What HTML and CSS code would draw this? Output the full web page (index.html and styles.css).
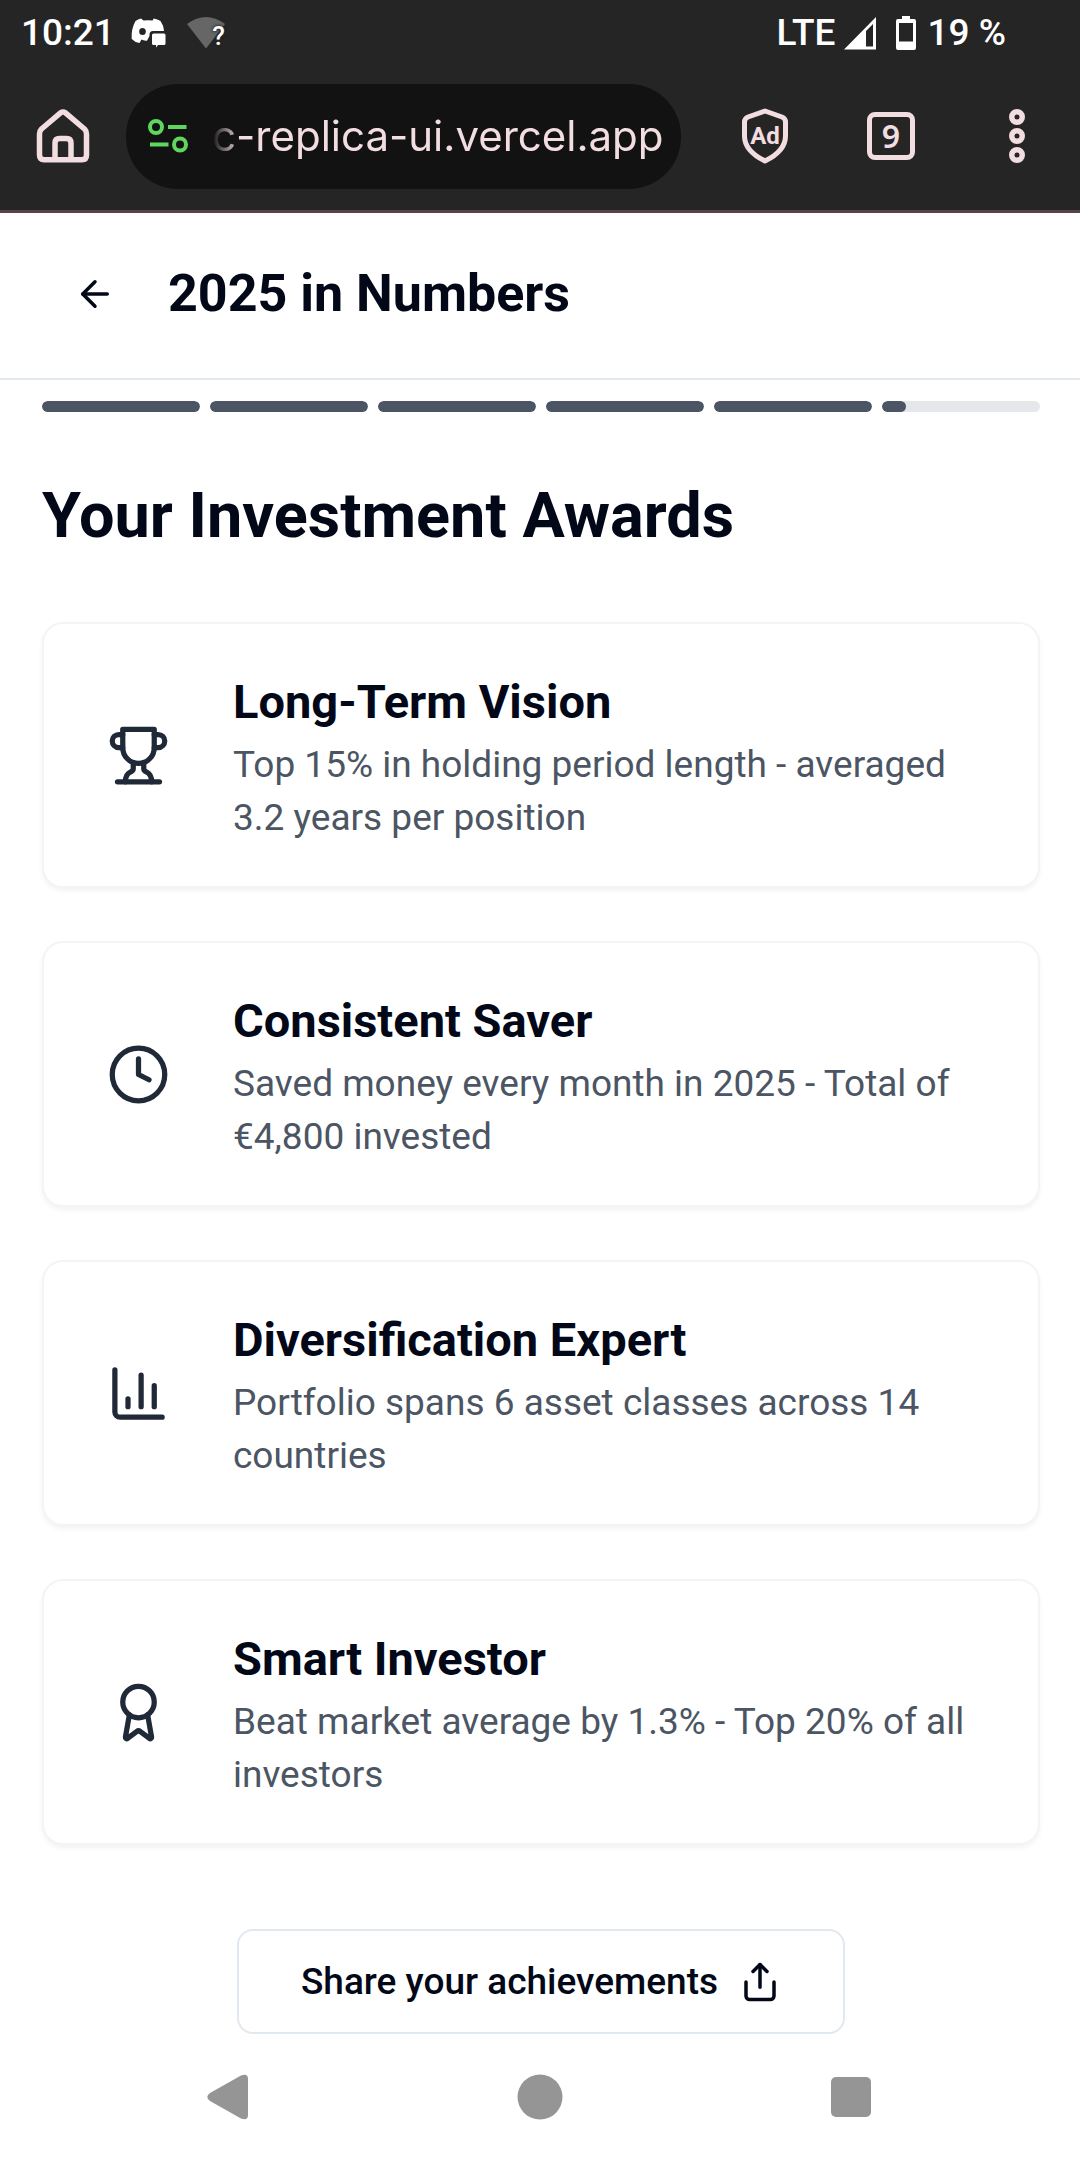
FILE: index.html
```html
<!DOCTYPE html>
<html lang="en">
<head>
<meta charset="utf-8">
<meta name="viewport" content="width=device-width, initial-scale=1">
<title>2025 in Numbers</title>
<link rel="stylesheet" href="styles.css">
</head>
<body>
<div class="screen">
  <div class="chrome">
    <div class="status">
      <div class="status-group">
        <span class="clock">10:21</span>
        <svg class="status-discord" width="36" height="32" viewBox="0 0 36 32" fill="#fff" aria-hidden="true">
          <path d="M10 1.500Q7 2 4.500 4Q0 12 .7 22Q4 25.500 8.500 26L10.500 22.500Q14 24 16 23.800L18.500 19V17.500Q18.500 14 22 14H33Q32.500 8 29.500 4Q26.500 2 22.800 1.500L21.500 3.500Q17 2.800 12.500 3.500Z"/>
          <ellipse cx="11.500" cy="14.500" rx="3.300" ry="3.600" fill="#252525"/>
          <path d="M22.500 16.500H33Q34.500 16.500 34.500 18V26.500Q34.500 28 33 28H27L25 30.500V28H22.500Q21 28 21 26.500V18Q21 16.500 22.500 16.500Z"/>
        </svg>
        <span class="wifi">
          <svg width="38" height="32" viewBox="0 0 38 32" aria-hidden="true"><path d="M0 7Q19 -7 38 7L19 31.500Z" fill="#666"/></svg>
          <span class="wifi-mark">?</span>
        </span>
      </div>
      <div class="status-group">
        <span class="lte">LTE</span>
        <svg class="signal" width="32" height="34" viewBox="0 0 32 34" aria-hidden="true"><path fill="#fff" fill-rule="evenodd" d="M0 33.500L32 1V33.500ZM22 15V30.500H29V8Z"/></svg>
        <svg class="battery" width="20" height="34" viewBox="0 0 20 34" aria-hidden="true"><path fill="#fff" fill-rule="evenodd" d="M6 0H14V3H18Q20 3 20 5V32Q20 34 18 34H2Q0 34 0 32V5Q0 3 2 3H6ZM3 7V25.500H17V7Z"/></svg>
        <span class="percent">19 %</span>
      </div>
    </div>
    <div class="toolbar">
      <button class="tool" type="button" aria-label="Home">
        <svg width="54" height="54" viewBox="0 0 54 54" fill="none" stroke="#f2dde1" stroke-width="5.500" stroke-linejoin="round" aria-hidden="true"><path d="M24.500 3.800Q27 2.200 29.500 3.800L48.500 20Q50.500 22 50.500 25V46Q50.500 50.800 46 50.800H8Q3.500 50.800 3.500 46V25Q3.500 22 5.500 20Z"/><path d="M19 50V34Q19 29.500 23.500 29.500H30.500Q35 29.500 35 34V50"/></svg>
      </button>
      <div class="address">
        <svg width="40" height="34" viewBox="0 0 40 34" fill="none" stroke="#5fd75f" stroke-width="4" aria-hidden="true"><circle cx="8" cy="8" r="6"/><circle cx="32" cy="25.500" r="6"/><path d="M20 8H38.500M2 25.500H20.500"/></svg>
        <input class="url" type="text" value="c-replica-ui.vercel.app" aria-label="Address">
      </div>
      <button class="tool" type="button" aria-label="Ad blocker">
        <svg width="48" height="56" viewBox="0 0 48 56" fill="none" stroke="#f2dde1" stroke-width="5" stroke-linejoin="round" aria-hidden="true"><path d="M24 3L41 9Q44.500 10.500 44.500 14V28Q44.500 43 24 53Q3.500 43 3.500 28V14Q3.500 10.500 7 9Z"/></svg>
        <span class="ad">Ad</span>
      </button>
      <button class="tool" type="button" aria-label="9 open tabs">
        <span class="tabs">9</span>
      </button>
      <button class="tool" type="button" aria-label="Menu">
        <svg width="16" height="54" viewBox="0 0 16 54" fill="none" stroke="#f2dde1" stroke-width="5.500" aria-hidden="true"><circle cx="8" cy="8" r="5.250"/><circle cx="8" cy="27" r="5.250"/><circle cx="8" cy="46" r="5.250"/></svg>
      </button>
    </div>
  </div>

  <header class="header">
    <button class="back" type="button" aria-label="Back">
      <svg class="icon-small" viewBox="0 0 24 24" aria-hidden="true"><path d="m12 19-7-7 7-7"/><path d="M19 12H5"/></svg>
    </button>
    <h1 class="title">2025 in Numbers</h1>
  </header>

  <main class="main">
    <div class="progress" role="progressbar" aria-label="Story progress" aria-valuemin="0" aria-valuemax="6" aria-valuenow="5">
      <div class="segment"><div class="fill" style="width:100%"></div></div>
      <div class="segment"><div class="fill" style="width:100%"></div></div>
      <div class="segment"><div class="fill" style="width:100%"></div></div>
      <div class="segment"><div class="fill" style="width:100%"></div></div>
      <div class="segment"><div class="fill" style="width:100%"></div></div>
      <div class="segment"><div class="fill" style="width:15%"></div></div>
    </div>
    <h2 class="heading">Your Investment Awards</h2>
    <div class="cards">
      <article class="card">
        <svg class="icon" viewBox="0 0 24 24" aria-hidden="true"><path d="M6 9H4.500a2.500 2.500 0 0 1 0-5H6"/><path d="M18 9h1.500a2.500 2.500 0 0 0 0-5H18"/><path d="M4 22h16"/><path d="M10 14.660V17c0 .550-.470.980-.970 1.210C7.850 18.750 7 20.240 7 22"/><path d="M14 14.660V17c0 .550.470.980.970 1.210C16.150 18.750 17 20.240 17 22"/><path d="M18 2H6v7a6 6 0 0 0 12 0V2Z"/></svg>
        <div class="card-text">
          <h3 class="card-title">Long-Term Vision</h3>
          <p class="card-desc">Top 15% in holding period length - averaged 3.2 years per position</p>
        </div>
      </article>
      <article class="card">
        <svg class="icon" viewBox="0 0 24 24" aria-hidden="true"><circle cx="12" cy="12" r="10"/><path d="M12 6v6l4 2"/></svg>
        <div class="card-text">
          <h3 class="card-title">Consistent Saver</h3>
          <p class="card-desc">Saved money every month in 2025 - Total of €4,800 invested</p>
        </div>
      </article>
      <article class="card">
        <svg class="icon" viewBox="0 0 24 24" aria-hidden="true"><path d="M3 3v16a2 2 0 0 0 2 2h16"/><path d="M18 17V9"/><path d="M13 17V5"/><path d="M8 17v-3"/></svg>
        <div class="card-text">
          <h3 class="card-title">Diversification Expert</h3>
          <p class="card-desc">Portfolio spans 6 asset classes across 14 countries</p>
        </div>
      </article>
      <article class="card">
        <svg class="icon" viewBox="0 0 24 24" aria-hidden="true"><path d="m15.477 12.890 1.515 8.526a.5.5 0 0 1-.810.470l-3.580-2.687a1 1 0 0 0-1.197 0l-3.586 2.686a.5.5 0 0 1-.810-.469l1.514-8.526"/><circle cx="12" cy="8" r="6"/></svg>
        <div class="card-text">
          <h3 class="card-title">Smart Investor</h3>
          <p class="card-desc">Beat market average by 1.3% - Top 20% of all investors</p>
        </div>
      </article>
    </div>
    <button class="share" type="button">
      Share your achievements
      <svg class="icon-small" viewBox="0 0 24 24" aria-hidden="true"><path d="M4 12v8a2 2 0 0 0 2 2h12a2 2 0 0 0 2-2v-8"/><path d="m16 6-4-4-4 4"/><path d="M12 2v13"/></svg>
    </button>
  </main>

  <nav class="nav" aria-label="System">
    <button class="nav-button" type="button" aria-label="Back"><svg width="46" height="46" viewBox="0 0 46 46" aria-hidden="true"><path d="M4 19L35 1.500Q42 -1 42 5V41Q42 47 35 44.500L4 27Q-1.500 23 4 19Z" fill="#959595"/></svg></button>
    <button class="nav-button" type="button" aria-label="Home"><svg width="46" height="46" viewBox="0 0 46 46" aria-hidden="true"><circle cx="23" cy="23" r="22.500" fill="#959595"/></svg></button>
    <button class="nav-button" type="button" aria-label="Recent apps"><svg width="46" height="46" viewBox="0 0 46 46" aria-hidden="true"><rect x="3" y="3" width="40" height="40" rx="5" fill="#959595"/></svg></button>
  </nav>
</div>
</body>
</html>
```
FILE: styles.css
```css
* { box-sizing: border-box; }

body {
  margin: 0;
  background: #fff;
  color: #020817;
  font-family: Roboto, "Liberation Sans", sans-serif;
}

h1, h2, h3, p { margin: 0; }

button {
  margin: 0;
  padding: 0;
  border: 0;
  background: none;
  color: inherit;
  font-family: inherit;
}

svg { display: block; flex: none; }

.screen {
  display: flex;
  flex-direction: column;
  min-height: 100vh;
}

/* Phone status bar and browser toolbar */
.chrome {
  background: #252525;
  border-bottom: 3px solid #5a4247;
  color: #fff;
}

.status {
  display: flex;
  justify-content: space-between;
  align-items: center;
  height: 64px;
  padding: 2px 74px 0 21px;
  font-size: 37px;
  line-height: 62px;
  font-weight: 500;
}

.status-group { display: flex; align-items: center; }
.status-discord { margin-left: 16px; }
.wifi { position: relative; margin-left: 20px; }
.wifi-mark {
  position: absolute;
  right: 0;
  bottom: 0;
  font-size: 26px;
  line-height: 26px;
  text-shadow: 0 0 3px #252525, 0 0 3px #252525;
}
.signal { margin-left: 8px; }
.battery { margin-left: 20px; }
.percent { margin-left: 12px; }

.toolbar {
  display: flex;
  align-items: center;
  height: 146px;
  padding-bottom: 2px;
}

.tool {
  position: relative;
  display: flex;
  align-items: center;
  justify-content: center;
  flex: none;
  width: 126px;
  height: 105px;
  color: #f2dde1;
}

.ad {
  position: absolute;
  inset: 0;
  display: grid;
  place-items: center;
  font-size: 24px;
  font-weight: 700;
}

.tabs {
  width: 48px;
  height: 48px;
  border: 5px solid #f2dde1;
  border-radius: 8px;
  font-family: "Noto Sans", sans-serif;
  font-size: 32px;
  line-height: 38px;
  font-weight: 600;
}

.address {
  display: flex;
  align-items: center;
  gap: 24px;
  flex: 1;
  min-width: 0;
  height: 105px;
  margin-right: 21px;
  padding: 0 16px 0 22px;
  border-radius: 52px;
  background: #121212;
}

.url {
  flex: 1;
  min-width: 0;
  padding: 0;
  border: 0;
  outline: 0;
  background: none;
  color: #f2dde1;
  font-family: Inter, Roboto, sans-serif;
  font-size: 42px;
  line-height: 56px;
  -webkit-mask-image: linear-gradient(to right, transparent, #000 28px);
  mask-image: linear-gradient(to right, transparent, #000 28px);
}

/* Page header */
.header {
  display: flex;
  align-items: center;
  gap: 20px;
  padding: 41px 42px 44px;
  border-bottom: 2px solid #e2e8f0;
}

.back {
  display: grid;
  place-items: center;
  width: 106px;
  height: 80px;
}

.title {
  font-size: 52px;
  line-height: 74px;
  font-weight: 700;
}

.icon, .icon-small {
  flex: none;
  fill: none;
  stroke: currentColor;
  stroke-width: 2;
  stroke-linecap: round;
  stroke-linejoin: round;
}

.icon { width: 63px; height: 63px; color: #1f2937; }
.icon-small { width: 42px; height: 42px; }

/* Content */
.main {
  display: flex;
  flex-direction: column;
  padding: 21px 40px 0 42px;
}

.progress { display: flex; gap: 10px; }

.segment {
  flex: 1;
  height: 11px;
  border-radius: 6px;
  background: #e5e7eb;
  overflow: hidden;
}

.fill {
  height: 100%;
  border-radius: 6px;
  background: #4b5563;
}

.heading {
  margin: 61px 0 64px;
  font-size: 63px;
  line-height: 85px;
  font-weight: 700;
}

.cards { display: grid; gap: 53px; }

.card {
  display: flex;
  align-items: center;
  gap: 63px;
  padding: 42px 63px;
  border: 2px solid #f3f4f6;
  border-radius: 21px;
  background: #fff;
  box-shadow: 0 3px 5px rgba(0, 0, 0, 0.05);
}

.card-text { flex: 1; min-width: 0; }

.card-title {
  font-size: 47px;
  line-height: 72px;
  font-weight: 700;
}

.card-desc {
  font-size: 37px;
  line-height: 53px;
  color: #4b5563;
}

.share {
  display: flex;
  align-items: center;
  align-self: center;
  gap: 21px;
  height: 105px;
  margin-top: 84px;
  padding: 0 62px;
  border: 2px solid #e2e8f0;
  border-radius: 16px;
  font-size: 37px;
  line-height: 53px;
  font-weight: 500;
}

/* System navigation */
.nav {
  display: flex;
  justify-content: center;
  align-items: center;
  flex: 1;
  min-height: 125px;
}

.nav-button {
  display: grid;
  place-items: center;
  width: 311px;
  height: 64px;
}
```
